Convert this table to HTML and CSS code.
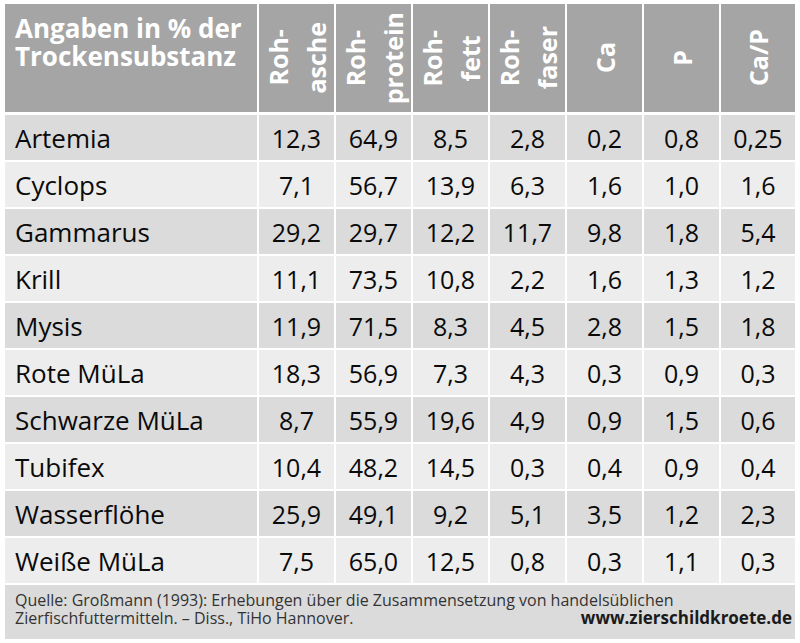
FILE: index.html
```html
<!DOCTYPE html>
<html lang="de">
<head>
<meta charset="utf-8">
<title>Futtertabelle</title>
<link rel="stylesheet" href="styles.css">
</head>
<body>
<div class="sheet">
  <div class="row head">
    <div class="cell title">Angaben in % der<br>Trockensubstanz</div>
    <div class="cell vh"><span>Roh-<br>asche</span></div>
    <div class="cell vh"><span>Roh-<br>protein</span></div>
    <div class="cell vh"><span>Roh-<br>fett</span></div>
    <div class="cell vh"><span>Roh-<br>faser</span></div>
    <div class="cell vh"><span>Ca</span></div>
    <div class="cell vh"><span>P</span></div>
    <div class="cell vh"><span>Ca/P</span></div>
  </div>
  <div class="row band1">
    <div class="cell name">Artemia</div><div class="cell num">12,3</div><div class="cell num">64,9</div><div class="cell num">8,5</div><div class="cell num">2,8</div><div class="cell num">0,2</div><div class="cell num">0,8</div><div class="cell num">0,25</div>
  </div>
  <div class="row band2">
    <div class="cell name">Cyclops</div><div class="cell num">7,1</div><div class="cell num">56,7</div><div class="cell num">13,9</div><div class="cell num">6,3</div><div class="cell num">1,6</div><div class="cell num">1,0</div><div class="cell num">1,6</div>
  </div>
  <div class="row band1">
    <div class="cell name">Gammarus</div><div class="cell num">29,2</div><div class="cell num">29,7</div><div class="cell num">12,2</div><div class="cell num">11,7</div><div class="cell num">9,8</div><div class="cell num">1,8</div><div class="cell num">5,4</div>
  </div>
  <div class="row band2">
    <div class="cell name">Krill</div><div class="cell num">11,1</div><div class="cell num">73,5</div><div class="cell num">10,8</div><div class="cell num">2,2</div><div class="cell num">1,6</div><div class="cell num">1,3</div><div class="cell num">1,2</div>
  </div>
  <div class="row band1">
    <div class="cell name">Mysis</div><div class="cell num">11,9</div><div class="cell num">71,5</div><div class="cell num">8,3</div><div class="cell num">4,5</div><div class="cell num">2,8</div><div class="cell num">1,5</div><div class="cell num">1,8</div>
  </div>
  <div class="row band2">
    <div class="cell name">Rote MüLa</div><div class="cell num">18,3</div><div class="cell num">56,9</div><div class="cell num">7,3</div><div class="cell num">4,3</div><div class="cell num">0,3</div><div class="cell num">0,9</div><div class="cell num">0,3</div>
  </div>
  <div class="row band1">
    <div class="cell name">Schwarze MüLa</div><div class="cell num">8,7</div><div class="cell num">55,9</div><div class="cell num">19,6</div><div class="cell num">4,9</div><div class="cell num">0,9</div><div class="cell num">1,5</div><div class="cell num">0,6</div>
  </div>
  <div class="row band2">
    <div class="cell name">Tubifex</div><div class="cell num">10,4</div><div class="cell num">48,2</div><div class="cell num">14,5</div><div class="cell num">0,3</div><div class="cell num">0,4</div><div class="cell num">0,9</div><div class="cell num">0,4</div>
  </div>
  <div class="row band1">
    <div class="cell name">Wasserflöhe</div><div class="cell num">25,9</div><div class="cell num">49,1</div><div class="cell num">9,2</div><div class="cell num">5,1</div><div class="cell num">3,5</div><div class="cell num">1,2</div><div class="cell num">2,3</div>
  </div>
  <div class="row band2">
    <div class="cell name">Weiße MüLa</div><div class="cell num">7,5</div><div class="cell num">65,0</div><div class="cell num">12,5</div><div class="cell num">0,8</div><div class="cell num">0,3</div><div class="cell num">1,1</div><div class="cell num">0,3</div>
  </div>
  <div class="foot">
    <div class="line">Quelle: Großmann (1993): Erhebungen über die Zusammensetzung von handelsüblichen</div>
    <div class="line last">
      <span>Zierfischfuttermitteln. – Diss., TiHo Hannover.</span>
      <span class="site">www.zierschildkroete.de</span>
    </div>
  </div>
</div>
</body>
</html>
```

FILE: styles.css
```css
html, body {
  margin: 0;
  background: #ffffff;
}

body {
  font-family: "Open Sans", "Noto Sans", sans-serif;
  color: #0a0a0a;
}

.sheet {
  margin: 4px 0 0 5px;
  width: 790px;
  display: flex;
  flex-direction: column;
  gap: 2px;
}

.row {
  display: grid;
  grid-template-columns: 252px repeat(6, 75px) 74px;
  column-gap: 2px;
}

.head {
  height: 108px;
  margin-bottom: 1px;
}

.head .cell {
  background: #a5a5a5;
  color: #ffffff;
  font-weight: bold;
}

.cell {
  display: flex;
  align-items: center;
  font-size: 25px;
}

.head .title {
  display: block;
  font-size: 26px;
  line-height: 28px;
  padding: 10px 0 0 10px;
}

.vh {
  justify-content: center;
  overflow: hidden;
}

.vh span {
  writing-mode: vertical-rl;
  transform: rotate(180deg);
  text-align: center;
  font-size: 25px;
  line-height: 38px;
  white-space: nowrap;
}

.band1,
.band2 {
  height: 45px;
}

.band1 .cell {
  background: #dbdbdb;
}

.band2 .cell {
  background: #ededed;
}

.name {
  padding-left: 10px;
  font-size: 26px;
}

.num {
  justify-content: center;
}

.foot {
  background: #dbdbdb;
  height: 54px;
  box-sizing: border-box;
  padding: 7px 3px 0 10px;
  font-size: 16px;
  line-height: 17px;
  color: #333333;
}

.line.last {
  display: flex;
  justify-content: space-between;
  align-items: baseline;
}

.site {
  font-weight: bold;
  font-size: 17px;
  color: #1a1a1a;
}
```
